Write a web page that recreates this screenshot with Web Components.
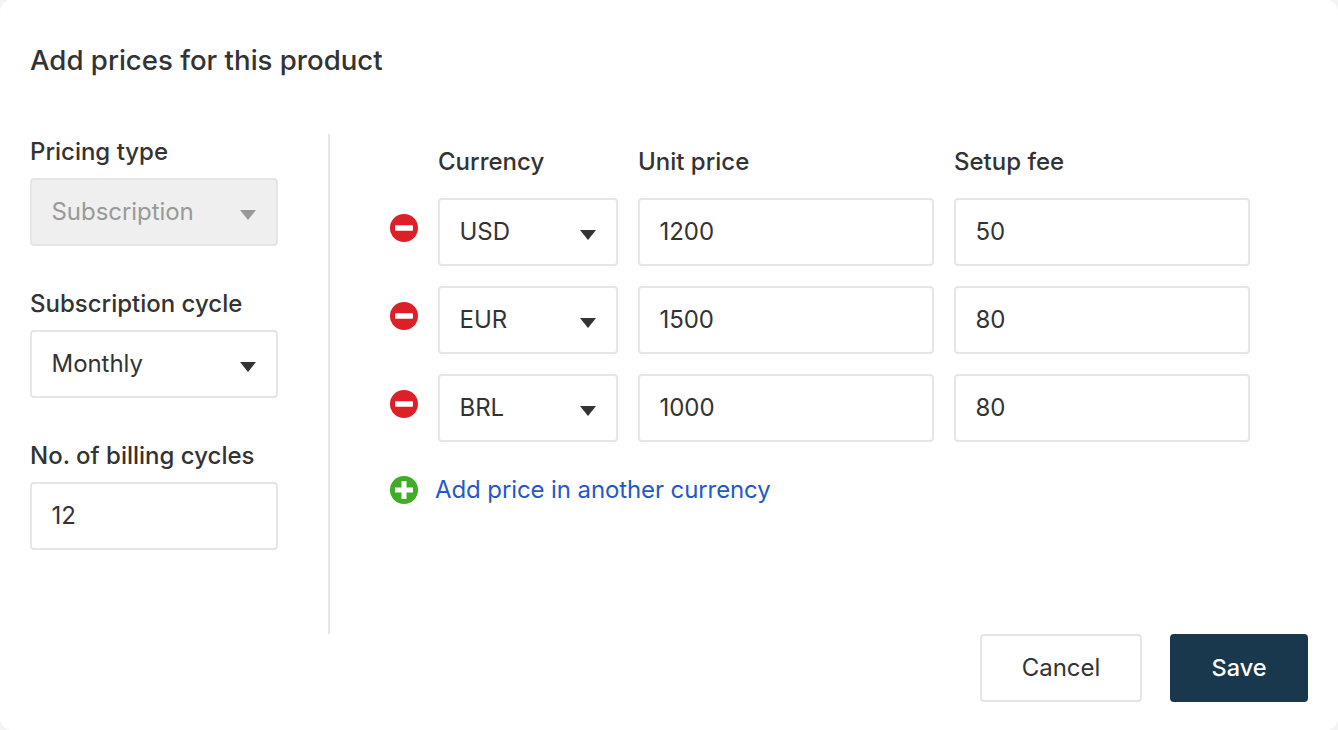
<!DOCTYPE html>
<html lang="en">
<head>
<meta charset="utf-8">
<title>Add prices</title>
<style>
    html, body { margin: 0; height: 100%; background: #f4f4f4; }
    body { font-family: Inter, "Liberation Sans", sans-serif; color: #333; overflow: hidden; }
</style>
</head>
<body>
<price-modal heading="Add prices for this product">
    <form-field slot="side" label="Pricing type"><select-box disabled value="Subscription"></select-box></form-field>
    <form-field slot="side" label="Subscription cycle"><select-box value="Monthly"></select-box></form-field>
    <form-field slot="side" label="No. of billing cycles"><text-box value="12"></text-box></form-field>

    <price-head slot="main"></price-head>
    <price-row slot="main" currency="USD" unit="1200" fee="50"></price-row>
    <price-row slot="main" currency="EUR" unit="1500" fee="80"></price-row>
    <price-row slot="main" currency="BRL" unit="1000" fee="80"></price-row>
    <add-link slot="main">Add price in another currency</add-link>

    <modal-button slot="actions">Cancel</modal-button>
    <modal-button slot="actions" primary>Save</modal-button>
</price-modal>

<script>
    const boxStyles = /* css */ `
        :host {
            display: flex;
            align-items: center;
            box-sizing: border-box;
            height: 68px;
            padding: 0 20px 0 19.5px;
            background: #fff;
            border: 2px solid #e6e6e6;
            border-radius: 4px;
            font-size: 24px;
            letter-spacing: -0.05px;
            color: #333;
        }
        span { position: relative; top: -1px; }
    `;

    customElements.define(
        'price-modal',
        class extends HTMLElement {
            connectedCallback() {
                this.attachShadow({ mode: 'open' });
                this.shadowRoot.innerHTML = /* html */ `
                    <style>
                        :host {
                            display: flex;
                            flex-direction: column;
                            box-sizing: border-box;
                            height: 730px;
                            padding: 40px 30px 0;
                            background: #fff;
                            border-radius: 12px;
                        }
                        h1 {
                            margin: 0 0 54px;
                            font-size: 27.6px;
                            line-height: 40px;
                            font-weight: 500;
                            color: #333;
                        }
                        .body {
                            display: flex;
                            height: 500px;
                        }
                        .side {
                            display: flex;
                            flex-direction: column;
                            box-sizing: border-box;
                            width: 300px;
                            padding-right: 50px;
                            border-right: 2px solid #e6e6e6;
                        }
                        .main {
                            display: flex;
                            flex-direction: column;
                            padding-left: 60px;
                        }
                        .actions {
                            display: flex;
                            justify-content: flex-end;
                            gap: 28px;
                        }
                    </style>
                    <h1>${this.getAttribute('heading')}</h1>
                    <div class="body">
                        <div class="side"><slot name="side"></slot></div>
                        <div class="main"><slot name="main"></slot></div>
                    </div>
                    <div class="actions"><slot name="actions"></slot></div>
                `;
            }
        }
    );

    customElements.define(
        'form-field',
        class extends HTMLElement {
            connectedCallback() {
                this.attachShadow({ mode: 'open' });
                this.shadowRoot.innerHTML = /* html */ `
                    <style>
                        :host { display: block; margin-bottom: 40px; }
                        label {
                            display: block;
                            height: 44px;
                            line-height: 36px;
                            font-size: 24px;
                            font-weight: 500;
                            color: #333;
                        }
                    </style>
                    <label>${this.getAttribute('label')}</label>
                    <slot></slot>
                `;
            }
        }
    );

    customElements.define(
        'select-box',
        class extends HTMLElement {
            connectedCallback() {
                this.attachShadow({ mode: 'open' });
                this.shadowRoot.innerHTML = /* html */ `
                    <style>
                        ${boxStyles}
                        :host { justify-content: space-between; }
                        :host([disabled]) { background: #efefef; color: #999; }
                        i {
                            width: 0;
                            height: 0;
                            margin-top: 5px;
                            border: 8px solid transparent;
                            border-bottom: 0;
                            border-top: 10px solid #333;
                        }
                        :host([disabled]) i { border-top-color: #999; }
                    </style>
                    <span>${this.getAttribute('value')}</span><i></i>
                `;
            }
        }
    );

    customElements.define(
        'text-box',
        class extends HTMLElement {
            connectedCallback() {
                this.attachShadow({ mode: 'open' });
                this.shadowRoot.innerHTML = /* html */ `
                    <style>${boxStyles}</style>
                    <span>${this.getAttribute('value')}</span>
                `;
            }
        }
    );

    customElements.define(
        'price-head',
        class extends HTMLElement {
            connectedCallback() {
                this.attachShadow({ mode: 'open' });
                this.shadowRoot.innerHTML = /* html */ `
                    <style>
                        :host {
                            display: grid;
                            grid-template-columns: 180px 296px 296px;
                            column-gap: 20px;
                            height: 36px;
                            margin-left: 48px;
                            padding-top: 8px;
                            font-size: 24px;
                            line-height: 40px;
                            font-weight: 500;
                            color: #333;
                        }
                    </style>
                    <span>Currency</span><span>Unit price</span><span>Setup fee</span>
                `;
            }
        }
    );

    customElements.define(
        'price-row',
        class extends HTMLElement {
            connectedCallback() {
                this.attachShadow({ mode: 'open' });
                this.shadowRoot.innerHTML = /* html */ `
                    <style>
                        :host {
                            display: grid;
                            grid-template-columns: 28px 180px 296px 296px;
                            column-gap: 20px;
                            margin-top: 20px;
                        }
                        svg { width: 28px; height: 28px; margin-top: 16px; display: block; }
                    </style>
                    <svg viewBox="0 0 28 28"><circle cx="14" cy="14" r="14" fill="#dd2027"/><rect x="5" y="11.2" width="18" height="5.6" rx="1" fill="#fff"/></svg>
                    <select-box value="${this.getAttribute('currency')}"></select-box>
                    <text-box value="${this.getAttribute('unit')}"></text-box>
                    <text-box value="${this.getAttribute('fee')}"></text-box>
                `;
            }
        }
    );

    customElements.define(
        'add-link',
        class extends HTMLElement {
            connectedCallback() {
                this.attachShadow({ mode: 'open' });
                this.shadowRoot.innerHTML = /* html */ `
                    <style>
                        :host {
                            display: flex;
                            align-items: center;
                            gap: 17px;
                            margin-top: 28px;
                            height: 40px;
                            font-size: 24px;
                            letter-spacing: -0.1px;
                            color: #2459c6;
                        }
                        svg { width: 28px; height: 28px; display: block; }
                        span { position: relative; top: -1px; }
                    </style>
                    <svg viewBox="0 0 28 28"><circle cx="14" cy="14" r="14" fill="#3fad26"/><path d="M11.5 5h5v6.500h6.500v5h-6.500v6.500h-5v-6.500h-6.500v-5h6.500z" fill="#fff"/></svg>
                    <span><slot></slot></span>
                `;
            }
        }
    );

    customElements.define(
        'modal-button',
        class extends HTMLElement {
            connectedCallback() {
                this.attachShadow({ mode: 'open' });
                this.shadowRoot.innerHTML = /* html */ `
                    <style>
                        :host {
                            display: flex;
                            align-items: center;
                            justify-content: center;
                            box-sizing: border-box;
                            width: 162px;
                            height: 68px;
                            padding-bottom: 2px;
                            background: #fff;
                            border: 2px solid #e6e6e6;
                            border-radius: 4px;
                            font-size: 24px;
                            color: #333;
                        }
                        :host([primary]) {
                            width: 138px;
                            background: #19374d;
                            border-color: #19374d;
                            color: #fff;
                            font-size: 23.5px;
                            font-weight: 500;
                        }
                    </style>
                    <slot></slot>
                `;
            }
        }
    );
</script>
</body>
</html>
